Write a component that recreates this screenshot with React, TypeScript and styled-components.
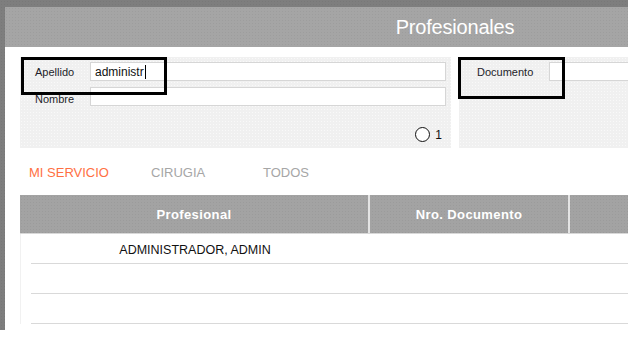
import styled, { createGlobalStyle } from "styled-components";

const GlobalStyle = createGlobalStyle`
  html, body {
    margin: 0;
    padding: 0;
    background: #ffffff;
    overflow: hidden;
    font-family: "Liberation Sans", sans-serif;
  }
`;

const dots = `radial-gradient(rgba(0,0,0,0.05) 0.6px, transparent 0.8px)`;

const Backdrop = styled.div`
  height: 330px;
  width: 628px;
  background-color: #7e7e7e;
  background-image: ${dots};
  background-size: 3px 3px;
  padding: 7px 0 0 5px;
  box-sizing: border-box;
  overflow: hidden;
`;

const Modal = styled.div`
  width: 900px;
  height: 323px;
  background: #ffffff;
  display: flex;
  flex-direction: column;
`;

const Header = styled.div`
  height: 40px;
  flex: none;
  background-color: #a5a5a5;
  background-image: ${dots};
  background-size: 3px 3px;
  display: flex;
  align-items: center;
  justify-content: center;
  color: #ffffff;
  font-size: 20px;
  letter-spacing: -0.2px;
`;

const Body = styled.div`
  padding: 10px 15px 0 15px;
  display: flex;
  flex-direction: column;
`;

const Filters = styled.div`
  display: flex;
  gap: 8px;
`;

const Panel = styled.div<{ $width: number; $padLeft: number }>`
  position: relative;
  width: ${(p) => p.$width}px;
  height: 91px;
  box-sizing: border-box;
  background-color: #f0f0f0;
  background-image: radial-gradient(rgba(255,255,255,0.6) 0.6px, transparent 0.8px);
  background-size: 3px 3px;
  padding: 5px 5px 0 ${(p) => p.$padLeft}px;
  display: flex;
  flex-direction: column;
  gap: 6px;
`;

const FieldRow = styled.div`
  display: flex;
  align-items: center;
  height: 19px;
`;

const Label = styled.label<{ $width: number; $shift?: number }>`
  width: ${(p) => p.$width}px;
  flex: none;
  font-size: 11px;
  color: #1e1e2a;
  position: relative;
  top: ${(p) => p.$shift ?? 0}px;
`;

const Input = styled.div`
  flex: 1;
  height: 19px;
  box-sizing: border-box;
  background: #ffffff;
  border: 1px solid #d6d6d6;
  font-size: 12px;
  color: #111;
  padding-left: 4px;
  display: flex;
  align-items: center;
`;

const Caret = styled.span`
  display: inline-block;
  width: 1px;
  height: 14px;
  background: #000;
  margin-left: 1px;
`;

const RadioRow = styled.div`
  margin-top: 15px;
  display: flex;
  justify-content: flex-end;
  align-items: center;
  gap: 5px;
  padding-right: 4px;
  font-size: 12px;
  color: #111;
`;

const Radio = styled.span`
  width: 15px;
  height: 15px;
  box-sizing: border-box;
  border: 1.5px solid #111;
  border-radius: 50%;
  background: #fff;
`;

const Mark = styled.div<{ $left: number; $width: number; $height: number }>`
  position: absolute;
  top: 0;
  left: ${(p) => p.$left}px;
  width: ${(p) => p.$width}px;
  height: ${(p) => p.$height}px;
  border: 3px solid #000;
  box-sizing: border-box;
  pointer-events: none;
`;

const Tabs = styled.div`
  display: flex;
  height: 38px;
  box-sizing: border-box;
  padding-top: 10px;
  align-items: center;
`;

const Tab = styled.div<{ $active?: boolean; $width: number }>`
  width: ${(p) => p.$width}px;
  padding-left: 9px;
  box-sizing: border-box;
  font-size: 13px;
  color: ${(p) => (p.$active ? "#ff7043" : "#a6a6a6")};
`;

const Table = styled.div`
  margin-top: 9px;
  display: flex;
  flex-direction: column;
`;

const HeadRow = styled.div`
  display: grid;
  grid-template-columns: 350px 200px 1fr;
  height: 39px;
  background-color: #a3a3a3;
  background-image: ${dots};
  background-size: 3px 3px;
  border-bottom: 1px solid #d8d8d8;
  box-sizing: border-box;
`;

const HeadCell = styled.div<{ $last?: boolean }>`
  display: flex;
  align-items: center;
  justify-content: center;
  color: #ffffff;
  font-weight: bold;
  font-size: 13px;
  letter-spacing: 0.4px;
  border-right: ${(p) => (p.$last ? "none" : "2px solid #e4e4e4")};
`;

const BodyRows = styled.div`
  border-left: 1px solid #f1f1f1;
  display: flex;
  flex-direction: column;
`;

const Row = styled.div`
  display: grid;
  grid-template-columns: 339px 200px 1fr;
  height: 30px;
  margin-left: 10px;
  border-bottom: 1px solid #d9d9d9;
  box-sizing: border-box;
`;

const Cell = styled.div`
  display: flex;
  align-items: center;
  justify-content: center;
  font-size: 12.5px;
  color: #111;
  padding: 2px 11px 0 0;
`;

const rows = [
  ["ADMINISTRADOR, ADMIN", "", ""],
  ["", "", ""],
  ["", "", ""],
];

export default function App() {
  return (
    <>
      <GlobalStyle />
      <Backdrop>
        <Modal>
          <Header>Profesionales</Header>
          <Body>
            <Filters>
              <Panel $width={431} $padLeft={15}>
                <FieldRow>
                  <Label $width={55}>Apellido</Label>
                  <Input>
                    administr
                    <Caret />
                  </Input>
                </FieldRow>
                <FieldRow>
                  <Label $width={55} $shift={2}>Nombre</Label>
                  <Input />
                </FieldRow>
                <RadioRow>
                  <Radio />
                  <span>1</span>
                </RadioRow>
                <Mark $left={1} $width={146} $height={38} />
              </Panel>
              <Panel $width={430} $padLeft={18}>
                <FieldRow>
                  <Label $width={72}>Documento</Label>
                  <Input />
                </FieldRow>
                <Mark $left={-1} $width={107} $height={42} />
              </Panel>
            </Filters>
            <Tabs>
              <Tab $active $width={122}>MI SERVICIO</Tab>
              <Tab $width={112}>CIRUGIA</Tab>
              <Tab $width={100}>TODOS</Tab>
            </Tabs>
            <Table>
              <HeadRow>
                <HeadCell>Profesional</HeadCell>
                <HeadCell>Nro. Documento</HeadCell>
                <HeadCell $last />
              </HeadRow>
              <BodyRows>
                {rows.map((r, i) => (
                  <Row key={i}>
                    {r.map((c, j) => (
                      <Cell key={j}>{c}</Cell>
                    ))}
                  </Row>
                ))}
              </BodyRows>
            </Table>
          </Body>
        </Modal>
      </Backdrop>
    </>
  );
}
